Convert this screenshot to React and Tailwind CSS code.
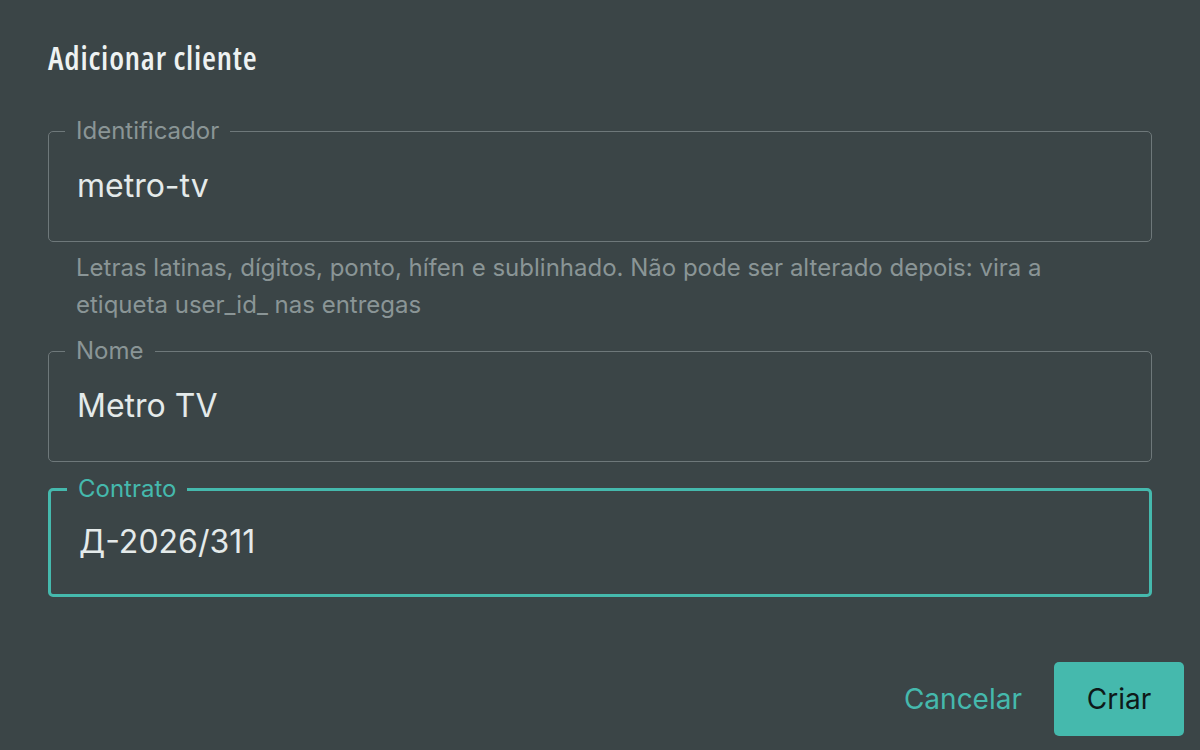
import React from 'react';

const inter = { fontFamily: 'Inter, "Noto Sans", sans-serif' };

const Field = ({ label, value, focused }) => {
    return (
        <fieldset
            className={`rounded-[5px] pl-7 pr-4 m-0 min-w-0 ${focused ? 'h-[120px] border-[3px] border-[#45b9ad]' : 'h-[123px] border-[1.5px] border-[#6e787a]'}`}
        >
            <legend className={`-ml-3 px-[11px] text-[24px] leading-[24px] ${focused ? 'text-[#45b9ad]' : 'text-[#8a9596]'}`}>{label}</legend>
            <div className={`${focused ? 'pt-[21px]' : 'pt-[23px]'} text-[32px] leading-[40px] text-[#e4eaea]`}>{value}</div>
        </fieldset>
    );
};

const App = () => {
    return (
        <div className="w-[1200px] h-[750px] bg-[#3b4547] flex flex-col" style={inter}>
            <div className="px-12 pt-10 flex flex-col">
                <h2
                    className="text-[32px] leading-[36px] tracking-[0.025em] font-semibold font-stretch-condensed text-[#eef2f2]"
                    style={{ fontFamily: '"Open Sans", "DejaVu Sans Condensed", sans-serif' }}
                >
                    Adicionar cliente
                </h2>
                <div className="mt-[43px]">
                    <Field label="Identificador" value="metro-tv" />
                </div>
                <p className="mt-[7px] px-7 text-[24px] leading-[37px] text-[#8a9596]">
                    Letras latinas, dígitos, ponto, hífen e sublinhado. Não pode ser alterado depois: vira a etiqueta user_id_ nas entregas
                </p>
                <div className="mt-4">
                    <Field label="Nome" value="Metro TV" />
                </div>
                <div className="mt-[15px]">
                    <Field label="Contrato" value="Д-2026/311" focused />
                </div>
            </div>
            <div className="mt-auto pb-[14px] pr-4 flex justify-end items-center gap-4">
                <button className="px-4 text-[28px] text-[#45b9ad]">Cancelar</button>
                <button className="w-[130px] h-[74px] rounded-[5px] bg-[#45b9ad] text-[28px] text-[#0e1919]">Criar</button>
            </div>
        </div>
    );
};

export default App;
